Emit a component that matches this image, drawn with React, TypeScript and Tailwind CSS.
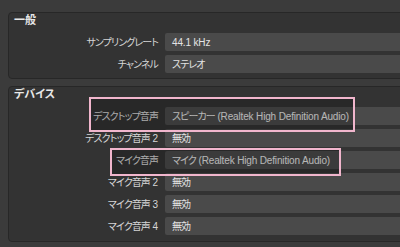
const font = "font-['Liberation_Sans','Noto_Sans_CJK_JP',sans-serif] [font-feature-settings:'palt']";

// japanese runs get tighter spacing, latin stays normal
const Txt = ({ text }: { text: string }) => (
  <span>
    {text.split(/([^\x00-\x7f]+)/).filter(Boolean).map((part, i) =>
      /[^\x00-\x7f]/.test(part) ? (
        <span key={i} className="tracking-[-0.9px]">{part}</span>
      ) : (
        <span key={i} className="tracking-[-0.15px]">{part}</span>
      )
    )}
  </span>
);

const Row = ({ label, value }: { label: string; value: string }) => (
  <div className="flex items-center h-[18px]">
    <div className="w-[148px] shrink-0 text-right text-[10px] text-[#d6d6d6]"><Txt text={label} /></div>
    <div className="ml-[7px] flex-1 h-[18px] rounded-[2px] bg-[#4a4a4a] pl-[7px] flex items-center text-[10px] text-[#e4e4e4] whitespace-pre">
      <Txt text={value} />
    </div>
  </div>
);

const Group = ({ title, children, className }: { title: string; children: React.ReactNode; className?: string }) => (
  <div className={`w-[430px] rounded-[4px] border border-[#272727] bg-[#333333] pl-[1px] ${className ?? ''}`}>
    <div className="pl-[4px] h-[14px] leading-[14px] text-[11px] font-bold text-[#e8e8e8]">{title}</div>
    {children}
  </div>
);

export default function App() {
  return (
    <div className={`relative w-[400px] h-[247px] overflow-hidden bg-[#3b3b3b] pt-[12px] pl-[8px] ${font}`}>
      <Group title="一般" className="pb-[5px]">
        <div className="mt-[6px] flex flex-col gap-[4px]">
          <Row label="サンプリングレート" value="44.1 kHz" />
          <Row label="チャンネル" value="ステレオ" />
        </div>
      </Group>
      <Group title="デバイス" className="mt-[7px] pb-[6px]">
        <div className="mt-[6px] flex flex-col gap-[4px]">
          <Row label="デスクトップ音声" value="スピーカー (Realtek High Definition Audio)" />
          <Row label="デスクトップ音声 2" value="無効" />
          <Row label="マイク音声" value="マイク (Realtek High Definition Audio)" />
          <Row label="マイク音声 2" value="無効" />
          <Row label="マイク音声 3" value="無効" />
          <Row label="マイク音声 4" value="無効" />
        </div>
      </Group>
      <div className="absolute left-[89px] top-[97px] w-[266px] h-[35px] border-2 border-[#f1b6cd] bg-black/20" />
      <div className="absolute left-[110px] top-[148px] w-[231px] h-[28px] border-2 border-[#f1b6cd] bg-black/20" />
    </div>
  );
}
